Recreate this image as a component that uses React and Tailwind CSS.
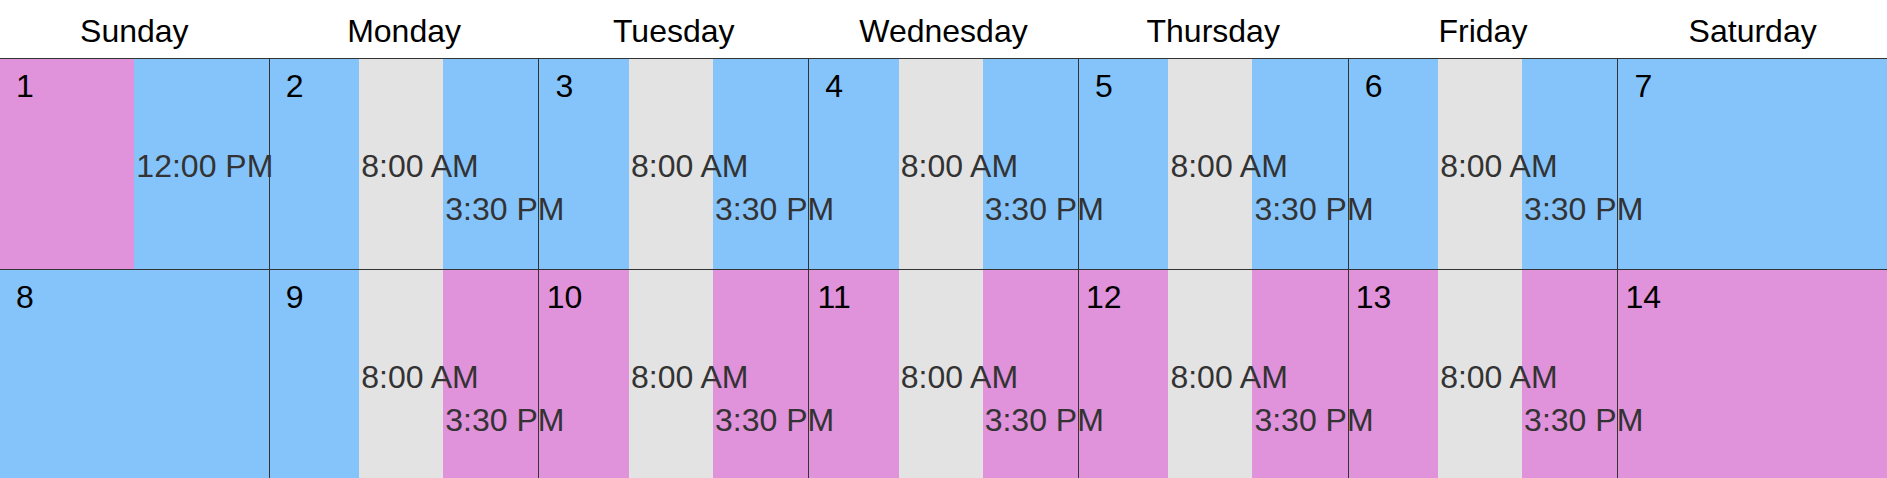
import React from 'react';

const PINK = '#e092da';
const BLUE = '#85c4fb';
const GREY = '#e3e3e3';

const dayNames = ['Sunday', 'Monday', 'Tuesday', 'Wednesday', 'Thursday', 'Friday', 'Saturday'];

// segments are [startHour, colour]; each one runs until the next starts (or midnight)
const workday = (before, after) => [[0, before], [8, GREY], [15.5, after]];

const weeks = [
  [
    { date: 1, segs: [[0, PINK], [12, BLUE]] },
    { date: 2, segs: workday(BLUE, BLUE) },
    { date: 3, segs: workday(BLUE, BLUE) },
    { date: 4, segs: workday(BLUE, BLUE) },
    { date: 5, segs: workday(BLUE, BLUE) },
    { date: 6, segs: workday(BLUE, BLUE) },
    { date: 7, segs: [[0, BLUE]] },
  ],
  [
    { date: 8, segs: [[0, BLUE]] },
    { date: 9, segs: workday(BLUE, PINK) },
    { date: 10, segs: workday(PINK, PINK) },
    { date: 11, segs: workday(PINK, PINK) },
    { date: 12, segs: workday(PINK, PINK) },
    { date: 13, segs: workday(PINK, PINK) },
    { date: 14, segs: [[0, PINK]] },
  ],
];

const labelTops = ['top-[89px]', 'top-[132px]', 'top-[175px]'];

const formatHour = (h) => {
  const hr = Math.floor(h);
  const min = Math.round((h - hr) * 60);
  const suffix = hr >= 12 ? 'PM' : 'AM';
  const h12 = hr % 12 === 0 ? 12 : hr % 12;
  return `${h12}:${String(min).padStart(2, '0')} ${suffix}`;
};

const DayCell = ({ day }) => {
  const { date, segs } = day;

  return (
    <div className="relative">
      <div className="absolute inset-0 flex">
        {segs.map(([start, color], i) => {
          const end = i + 1 < segs.length ? segs[i + 1][0] : 24;
          return (
            <div
              key={i}
              className="h-full shrink-0"
              style={{ width: `${((end - start) / 24) * 100}%`, backgroundColor: color }}
            />
          );
        })}
      </div>

      <div className="relative w-[50px] pt-[9px] text-center text-black">{date}</div>

      {segs.slice(1).map(([start], i) => (
        <div
          key={start}
          className={`absolute z-10 pl-[2px] whitespace-nowrap text-[#333] ${labelTops[i]}`}
          style={{ left: `${(start / 24) * 100}%` }}
        >
          {formatHour(start)}
        </div>
      ))}
    </div>
  );
};

const App = () => {
  return (
    <div className="w-full bg-white font-['Liberation_Sans',Arial,sans-serif] text-[32px] leading-[37px]">
      <div className="grid grid-cols-7 gap-px h-[59px] border-b border-[#333]">
        {dayNames.map((name) => (
          <div key={name} className="pt-[13px] text-center text-black">
            {name}
          </div>
        ))}
      </div>

      {weeks.map((week, w) => (
        <div key={w} className="grid grid-cols-7 gap-px h-[211px] bg-[#333] border-b border-[#333]">
          {week.map((day) => (
            <DayCell key={day.date} day={day} />
          ))}
        </div>
      ))}
    </div>
  );
};

export default App;
